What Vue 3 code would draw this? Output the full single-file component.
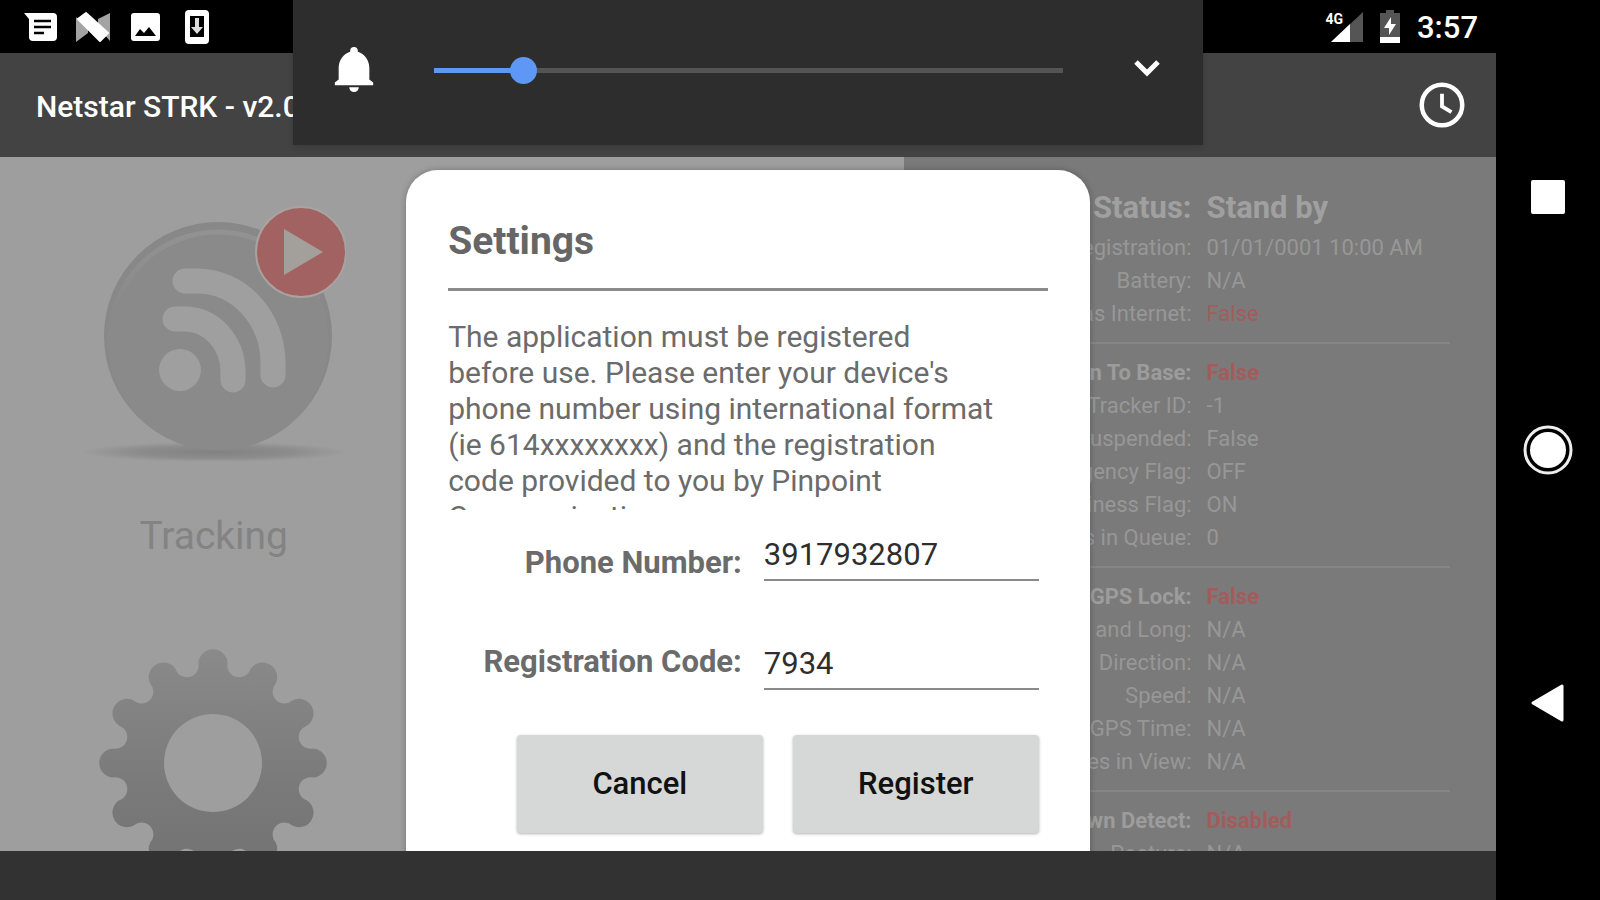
<template>
  <div class="device">
    <div class="screen">
      <div class="status-bar">
        <div class="notifications">
          <svg width="36" height="36" viewBox="0 0 36 36">
            <path d="M1 4h29a4 4 0 0 1 4 4v20a4 4 0 0 1-4 4H10a4 4 0 0 1-4-4V10z" fill="#fff" />
            <path d="M11 12h17M11 18h17M11 24h10" stroke="#000" stroke-width="2.6" />
          </svg>
          <svg width="36" height="36" viewBox="0 0 36 36">
            <path d="M1 8l12 12v4L1 33zM35 4v28L23 18V10z" fill="#a3a3a3" />
            <path d="M3 10l8-6 22 20-8 8z" fill="#fff" stroke="#fff" stroke-width="2" stroke-linejoin="round" />
          </svg>
          <svg width="36" height="36" viewBox="0 0 36 36">
            <rect x="4" y="4" width="29" height="28" rx="3" fill="#fff" />
            <path d="M8 27l5-7 4 4 5-6 7 9z" fill="#000" />
          </svg>
          <svg width="36" height="36" viewBox="0 0 36 36">
            <rect x="6" y="1" width="24" height="34" rx="4" fill="#fff" />
            <path d="M11 7h14v21H11z" fill="#000" />
            <path d="M16 9h4v9h4l-6 7-6-7h4z" fill="#ddd" />
          </svg>
        </div>
        <div class="system">
          <div class="signal">
            <span>4G</span>
            <svg width="32" height="32" viewBox="0 0 32 32">
              <path d="M32 1v30H0z" fill="#555" />
              <path d="M19 13v18H0z" fill="#fff" />
            </svg>
          </div>
          <svg width="20" height="33" viewBox="0 0 20 33">
            <path d="M6 0h8v3h6v30H0V3h6z" fill="#555" />
            <path d="M0 27h20v6H0z" fill="#fff" />
            <path d="M11 7L4 18h5v7l7-11h-5z" fill="#fff" />
          </svg>
          <time>3:57</time>
        </div>
      </div>

      <header class="app-bar">
        <h1>Netstar STRK - v2.0</h1>
        <button type="button" class="icon-btn" aria-label="History">
          <svg width="54" height="54" viewBox="0 0 24 24" fill="none" stroke="#fff">
            <circle cx="12" cy="12" r="9" stroke-width="2" />
            <path d="M12 7v5.600l4.200 2.600" stroke-width="1.700" />
          </svg>
        </button>
      </header>

      <main class="content">
        <section class="tiles">
          <button type="button" class="tile">
            <svg width="264" height="264" viewBox="0 0 264 264">
              <defs>
                <radialGradient id="ground">
                  <stop offset="0" stop-color="#828282" />
                  <stop offset="0.6" stop-color="#8c8c8c" />
                  <stop offset="1" stop-color="#9e9e9e" />
                </radialGradient>
                <linearGradient id="rim" x1="0" y1="0" x2="0" y2="1">
                  <stop offset="0" stop-color="#929292" />
                  <stop offset="0.35" stop-color="#8a8a8a" />
                </linearGradient>
              </defs>
              <ellipse cx="132" cy="252" rx="132" ry="10" fill="url(#ground)" />
              <circle cx="136" cy="136" r="114" fill="#888" />
              <circle cx="136" cy="140" r="108" fill="#8a8a8a" stroke="url(#rim)" stroke-width="5" />
              <g fill="none" stroke="#9f9f9f" stroke-width="25" stroke-linecap="round">
                <path d="M93 119h10A48 53 0 0 1 151 172v8" />
                <path d="M103 81h12A76 82 0 0 1 191 163v12" />
              </g>
              <circle cx="98" cy="170" r="21" fill="#9f9f9f" />
              <circle cx="219" cy="52" r="45" fill="#a36262" stroke="#a8a3a0" stroke-width="2" />
              <path d="M202 29l39 23-39 23z" fill="#a3a09c" />
            </svg>
            <span>Tracking</span>
          </button>
          <button type="button" class="tile" aria-label="Settings">
            <svg width="264" height="264" viewBox="0 0 264 264">
              <defs>
                <linearGradient id="metal" x1="0" y1="0" x2="0" y2="1">
                  <stop offset="0" stop-color="#8a8a8a" />
                  <stop offset="0.6" stop-color="#7a7a7a" />
                  <stop offset="1" stop-color="#727272" />
                </linearGradient>
              </defs>
              <path :d="gearPath" fill="url(#metal)" />
              <circle cx="131" cy="136" r="49" fill="#9e9e9e" />
            </svg>
          </button>
        </section>

        <section class="status-panel">
          <table v-for="(group, i) in statusGroups" :key="i">
            <tbody>
              <tr v-for="row in group" :key="row.label" :class="row.type">
                <th scope="row">{{ row.label }}:</th>
                <td :class="{ alert: row.alert }">{{ row.value }}</td>
              </tr>
            </tbody>
          </table>
        </section>

        <form class="dialog" role="dialog" aria-labelledby="dialog-title" @submit.prevent>
          <h2 id="dialog-title">Settings</h2>
          <p class="description">
            The application must be registered before use. Please enter your device's phone
            number using international format (ie 614xxxxxxxx) and the registration code
            provided to you by Pinpoint Communications.
          </p>
          <div class="fields">
            <label for="phone">Phone Number:</label>
            <input id="phone" v-model="form.phone" type="text" />
            <label for="code">Registration Code:</label>
            <input id="code" v-model="form.code" type="text" />
          </div>
          <div class="actions">
            <button type="button">Cancel</button>
            <button type="submit">Register</button>
          </div>
        </form>
      </main>

      <footer class="bottom-bar"></footer>

      <div class="volume">
        <svg width="40" height="46" viewBox="0 0 40 48" fill="#fff">
          <path d="M20 0c-2.500 0-4 1.600-4 4v1C9 7 4 14 4 22v12l-4 3v3h40v-3l-4-3V22C36 14 31 7 24 5V4c0-2.400-1.500-4-4-4z" />
          <path d="M15 42h10a5 5 0 0 1-10 0z" />
        </svg>
        <input
          v-model.number="volume"
          type="range"
          min="0"
          max="7"
          aria-label="Ring volume"
          :style="{ '--fill': volumeFill }"
        />
        <button type="button" class="icon-btn" aria-label="Expand">
          <svg width="28" height="24" viewBox="0 0 28 24" fill="none" stroke="#fff" stroke-width="5">
            <path d="M3 4l11 11L25 4" />
          </svg>
        </button>
      </div>
    </div>

    <nav class="nav-bar">
      <button type="button" aria-label="Recent apps">
        <svg width="52" height="52" viewBox="0 0 52 52"><rect x="9" y="9" width="34" height="34" rx="2" fill="#fff" /></svg>
      </button>
      <button type="button" aria-label="Home">
        <svg width="52" height="52" viewBox="0 0 52 52">
          <circle cx="26" cy="26" r="23" fill="none" stroke="#eee" stroke-width="3" />
          <circle cx="26" cy="26" r="18" fill="#fff" />
        </svg>
      </button>
      <button type="button" aria-label="Back">
        <svg width="52" height="52" viewBox="0 0 52 52">
          <path d="M11 26L40 9v34z" fill="#fff" stroke="#fff" stroke-width="3" stroke-linejoin="round" />
        </svg>
      </button>
    </nav>
  </div>
</template>

<script setup>
import { ref, reactive, computed } from 'vue'

const form = reactive({
  phone: '3917932807',
  code: '7934'
})

const volume = ref(1)
const volumeFill = computed(() => volume.value / 7)

const statusGroups = [
  [
    { label: 'Status', value: 'Stand by', type: 'headline' },
    { label: 'Last Registration', value: '01/01/0001 10:00 AM' },
    { label: 'Battery', value: 'N/A' },
    { label: 'Has Internet', value: 'False', alert: true }
  ],
  [
    { label: 'Return To Base', value: 'False', type: 'strong', alert: true },
    { label: 'Tracker ID', value: '-1' },
    { label: 'Suspended', value: 'False' },
    { label: 'Emergency Flag', value: 'OFF' },
    { label: 'Business Flag', value: 'ON' },
    { label: 'Messages in Queue', value: '0' }
  ],
  [
    { label: 'GPS Lock', value: 'False', type: 'strong', alert: true },
    { label: 'Lat and Long', value: 'N/A' },
    { label: 'Direction', value: 'N/A' },
    { label: 'Speed', value: 'N/A' },
    { label: 'GPS Time', value: 'N/A' },
    { label: 'Satellites in View', value: 'N/A' }
  ],
  [
    { label: 'Man Down Detect', value: 'Disabled', type: 'strong', alert: true },
    { label: 'Posture', value: 'N/A' }
  ]
]

// 12 round teeth joined by round notches, all centred on one circle
const gearPath = buildGear(131, 136, 101, 12)

function buildGear(cx, cy, radius, teeth) {
  const half = 8.3
  const point = (deg) => {
    const a = (deg * Math.PI) / 180
    return `${(cx + radius * Math.sin(a)).toFixed(2)} ${(cy - radius * Math.cos(a)).toFixed(2)}`
  }
  let d = `M${point(-half)}`
  for (let i = 0; i < teeth; i++) {
    const deg = (i * 360) / teeth
    d += `A14.600 14.600 0 0 1 ${point(deg + half)}`
    d += `A11.800 11.800 0 0 0 ${point(deg + 360 / teeth - half)}`
  }
  return d + 'Z'
}
</script>

<style>
body {
  background: #000;
}
</style>

<style scoped>
.device {
  display: flex;
  height: 100vh;
  background: #000;
  font-family: Roboto, sans-serif;
  overflow: hidden;
}

.device * {
  box-sizing: border-box;
}

button {
  font-family: inherit;
  border: none;
  background: none;
  padding: 0;
  cursor: pointer;
}

svg {
  display: block;
}

.screen {
  position: relative;
  flex: 1;
  min-width: 0;
  display: flex;
  flex-direction: column;
}

.status-bar {
  display: flex;
  justify-content: space-between;
  align-items: center;
  height: 53px;
  padding: 0 18px 0 23px;
  color: #fff;
}

.notifications {
  display: flex;
  align-items: center;
  gap: 16px;
}

.system {
  display: flex;
  align-items: center;
  gap: 17px;
}

.signal {
  display: flex;
  align-items: flex-start;
}

.signal span {
  font-size: 14px;
  line-height: 16px;
  font-weight: 700;
  margin-right: -12px;
}

.system time {
  padding-top: 3px;
  font-size: 31px;
  line-height: 40px;
  font-weight: 500;
}

.app-bar {
  display: flex;
  justify-content: space-between;
  align-items: center;
  height: 104px;
  padding: 0 27px 0 36px;
  background: #434343;
}

.app-bar h1 {
  margin: 0;
  padding-top: 4px;
  font-size: 30px;
  line-height: 36px;
  font-weight: 500;
  color: #fff;
}

.content {
  position: relative;
  flex: 1;
  min-height: 0;
  display: flex;
  overflow: hidden;
}

.tiles {
  width: 60.4%;
  padding-top: 43px;
  background: #9e9e9e;
}

.tile {
  display: flex;
  flex-direction: column;
  align-items: center;
  gap: 50px;
  width: 47.3%;
  height: 427px;
}

.tile span {
  font-size: 39px;
  line-height: 44px;
  color: #838383;
}

.status-panel {
  flex: 1;
  padding: 32px 46px 0;
  background: #7a7a7a;
}

table {
  width: 100%;
  border-collapse: collapse;
  table-layout: fixed;
  font-size: 22px;
  line-height: 33px;
  color: #979797;
}

table + table {
  margin-top: 12px;
  border-top: 2px solid #858585;
}

table + table tr:first-child > * {
  padding-top: 12px;
}

th {
  width: 242px;
  padding: 0;
  text-align: right;
  font-weight: 400;
  white-space: nowrap;
}

td {
  padding: 0 0 0 15px;
  white-space: nowrap;
}

.headline > * {
  padding-bottom: 4px;
  font-size: 31px;
  line-height: 38px;
  font-weight: 700;
  color: #a0a0a0;
}

.strong > * {
  font-weight: 700;
  color: #9c9c9c;
}

td.alert {
  color: #a35c5c;
}

.dialog {
  position: absolute;
  top: 13px;
  left: 0;
  right: 0;
  width: 45.7%;
  min-height: 720px;
  margin: 0 auto;
  padding: 49px 42px 0;
  border-radius: 32px;
  background: #fff;
  box-shadow: 0 0 6px rgba(0, 0, 0, 0.25);
}

.dialog h2 {
  margin: 0 0 28px;
  padding-bottom: 25px;
  border-bottom: 3px solid #8a8a8a;
  font-size: 39px;
  line-height: 44px;
  font-weight: 700;
  color: #666;
}

.description {
  height: 191px;
  margin: 0 0 25px;
  padding-right: 48px;
  overflow: hidden;
  font-size: 30px;
  line-height: 36px;
  color: #6b6b6b;
}

.fields {
  display: grid;
  grid-template-columns: 1fr 275px;
  gap: 63px 22px;
  padding-right: 9px;
}

.fields label {
  font-size: 31px;
  line-height: 36px;
  font-weight: 700;
  text-align: right;
  white-space: nowrap;
  color: #6b6b6b;
}

.fields label:first-child {
  align-self: end;
}

.fields input {
  width: 100%;
  height: 46px;
  padding: 0 0 6px;
  border: none;
  border-bottom: 2px solid #8a8a8a;
  outline: none;
  background: none;
  font-family: inherit;
  font-size: 31px;
  color: #2e2e2e;
}

.actions {
  display: flex;
  justify-content: flex-end;
  gap: 30px;
  margin-top: 45px;
  padding-right: 9px;
}

.actions button {
  width: 246px;
  height: 98px;
  border-radius: 4px;
  background: #d6d7d7;
  box-shadow: 0 1px 3px rgba(0, 0, 0, 0.3);
  font-size: 31px;
  line-height: 36px;
  font-weight: 500;
  color: #111;
}

.bottom-bar {
  height: 49px;
  background: #323232;
}

.volume {
  position: absolute;
  top: 0;
  left: 0;
  right: 0;
  display: flex;
  align-items: center;
  width: 60.8%;
  height: 145px;
  margin: 0 auto;
  padding: 0 42px 5px 41px;
  background: #2d2d2d;
  box-shadow: 0 2px 6px rgba(0, 0, 0, 0.15);
}

.volume input {
  appearance: none;
  flex: 1;
  min-width: 0;
  height: 27px;
  margin: 0 57px 0 46px;
  background: none;
}

.volume input::-webkit-slider-runnable-track {
  height: 27px;
  background:
    linear-gradient(
      to right,
      #5e97f6 calc(var(--fill) * 100%),
      #545454 calc(var(--fill) * 100%)
    )
    center / calc(100% - 27px) 5px no-repeat;
}

.volume input::-webkit-slider-thumb {
  appearance: none;
  width: 27px;
  height: 27px;
  border-radius: 50%;
  background: #5e97f6;
}

.nav-bar {
  display: flex;
  flex-direction: column;
  width: 104px;
  padding: 70px 0;
  background: #000;
}

.nav-bar button {
  flex: 1;
  display: flex;
  align-items: center;
  justify-content: center;
}
</style>
